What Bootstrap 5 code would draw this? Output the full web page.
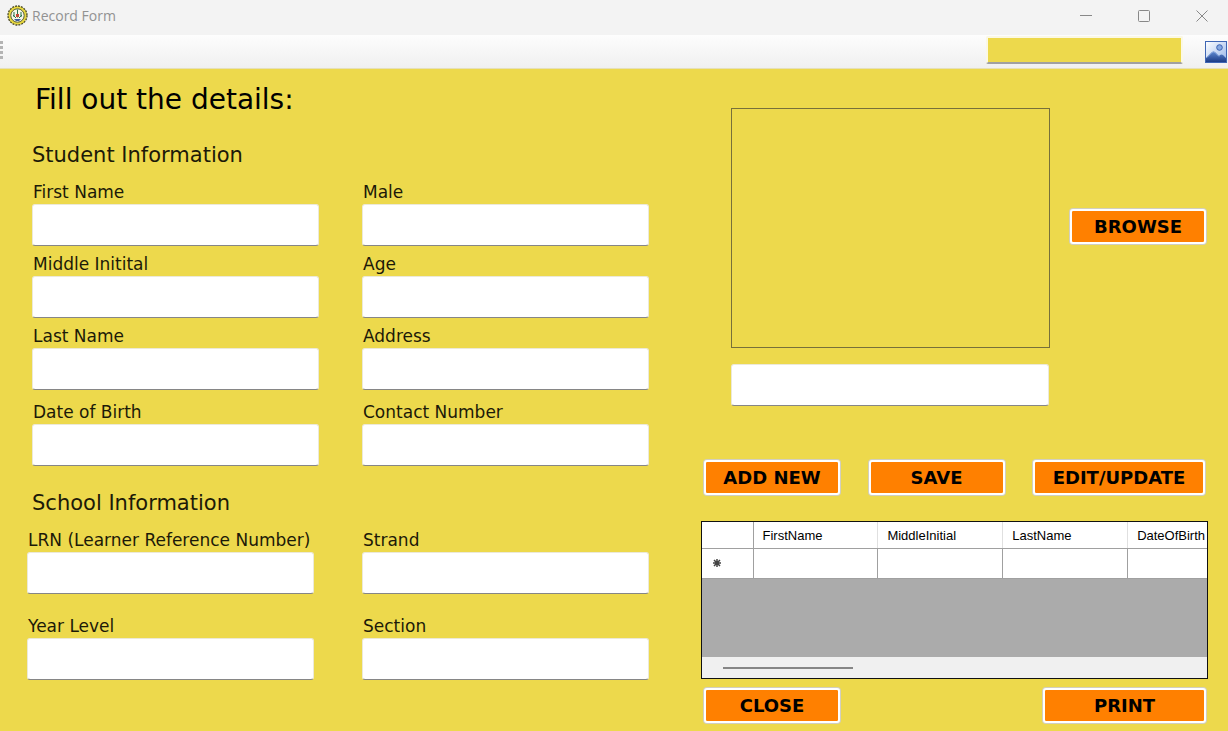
<!DOCTYPE html>
<html lang="en">
<head>
<meta charset="utf-8">
<meta name="viewport" content="width=device-width, initial-scale=1">
<title>Record Form</title>
<link href="https://cdn.jsdelivr.net/npm/bootstrap@5.3.0/dist/css/bootstrap.min.css" rel="stylesheet">
<style>
  body { background: #edd94c; color: #1c1a08; font-family: "DejaVu Sans", Verdana, sans-serif; min-height: 100vh; }
  .titlebar { height: 35px; background: #f3f3f3; color: #929292; font: 14px/20px "Open Sans", "Noto Sans", sans-serif; padding: 0 20px 4px 7px; }
  .titlebar button, .tool-btn { border: 0; background: none; padding: 0; display: flex; }
  .caption-btns { gap: 46px; }
  .toolstrip { height: 34px; background: linear-gradient(#fdfdfd, #f0f0f0); border-bottom: 1px solid #e6e0b8; padding-right: 1px; gap: 22px; }
  .tool-input { width: 197px; height: 28px; background: #edd94c; border: 2px solid #fbf8e4; border-bottom-color: #a0a0a0; border-radius: 2px; }
  .form-area { display: grid; grid-template-columns: minmax(0, 649fr) minmax(0, 507fr); column-gap: 52px; padding-right: 20px; }
  .form-title { font-size: 28px; line-height: 36px; margin: 0; padding: 13px 0 0 35px; color: #000; }
  .section-title { font-size: 21px; line-height: 28px; margin: 0; }
  .fields { display: grid; grid-template-columns: repeat(2, minmax(0, 1fr)); }
  .student { padding: 23px 0 0 32px; }
  .student .fields { gap: 6px 43px; padding-top: 11px; }
  .school { padding: 23px 0 0 27px; }
  .school .section-title { padding-left: 5px; }
  .school .fields { gap: 20px 48px; padding-top: 11px; }
  .fields label { display: block; font-size: 17px; line-height: 24px; padding-left: 1px; white-space: nowrap; }
  .text-field { height: 42px; background: #fff; border: 1px solid #ece9d8; border-bottom-color: #868686; border-radius: 3px; }
  .btn-form { --bs-btn-bg: #ff8000; --bs-btn-color: #000; --bs-btn-hover-bg: #ff9020; --bs-btn-hover-color: #000; --bs-btn-active-bg: #e67300;
    height: 35px; min-width: 136px; margin: 1px; padding: 0; border: 2px solid #fff !important; border-radius: 3px; box-shadow: 0 0 0 1px #d2cfc0;
    font-size: 18px; line-height: 30px; font-weight: 700; background-clip: padding-box; }
  .btn-wide { min-width: 172px; }
  .btn-print { min-width: 163px; }
  .photo-row { padding: 39px 1px 0 30px; gap: 19px; }
  .photo { height: 240px; border: 1px solid #77703a; }
  .photo-name { padding: 16px 159px 0 30px; }
  .actions { padding: 53px 2px 0; }
  .bottom-actions { padding: 8px 1px 0 2px; }
  .data-grid { height: 158px; margin-top: 25px; border: 1px solid #111; background: #ababab; color: #000; font: 13px/16px "Liberation Sans", Arial, sans-serif; }
  .data-grid table { width: 551px; table-layout: fixed; border-collapse: collapse; background: #fff; }
  .data-grid th { height: 26px; padding: 3px 9px 0; font-weight: 400; border-right: 1px solid #e0e0e0; border-bottom: 1px solid #a0a0a0; }
  .data-grid td { height: 30px; border-right: 1px solid #a0a0a0; border-bottom: 1px solid #a0a0a0; }
  .data-grid tr > :first-child { width: 51px; border-right-color: #a0a0a0; }
  .data-grid td:first-child { padding-left: 11px; }
  .scroll-track { height: 21px; background: #f0f0f0; padding-left: 21px; }
  .scroll-thumb { width: 130px; height: 2px; background: #868686; }
</style>
</head>
<body>
<header>
  <div class="titlebar d-flex align-items-center justify-content-between">
    <div class="d-flex align-items-center gap-1">
      <svg width="21" height="21" viewBox="0 0 21 21" aria-hidden="true">
        <circle cx="10.500" cy="10.500" r="9.500" fill="#e8d83e" stroke="#4b4a26" stroke-width="1.300" stroke-dasharray="2 1"/>
        <circle cx="10.500" cy="10.500" r="6.700" fill="#f6f6e8" stroke="#59603b"/>
        <path d="M10.500 4.500v8M7 7v5M14 7v5M6 10l3 3M15 10l-3 3" stroke="#26734a" fill="none"/>
        <path d="M9 9h3v3H9z" fill="#c3483a"/><path d="M7 14h7l-2 2H9z" fill="#3b5d9c"/>
      </svg>
      <span>Record Form</span>
    </div>
    <div class="caption-btns d-flex">
      <button type="button" aria-label="Minimize"><svg width="12" height="12"><path d="M0 5.500h12" stroke="#888"/></svg></button>
      <button type="button" aria-label="Maximize"><svg width="12" height="12"><rect x=".5" y=".5" width="11" height="11" rx="1" fill="none" stroke="#888"/></svg></button>
      <button type="button" aria-label="Close"><svg width="12" height="12"><path d="M.5 .5l11 11M11.500 .5l-11 11" stroke="#888"/></svg></button>
    </div>
  </div>
  <div class="toolstrip d-flex align-items-center">
    <svg class="mb-1" width="4" height="20" fill="#b4b4b4" aria-hidden="true"><path d="M0 1h3v3H0zM0 6h3v3H0zM0 11h3v3H0zM0 16h3v3H0z"/></svg>
    <input class="tool-input ms-auto mb-1" type="text" aria-label="Search">
    <button class="tool-btn" type="button" aria-label="Picture">
      <svg width="22" height="22" viewBox="0 0 22 22">
        <defs><linearGradient id="sky" x2="1" y2="1"><stop stop-color="#fff"/><stop offset="1" stop-color="#94b4e8"/></linearGradient>
        <linearGradient id="hill" x2="0" y2="1"><stop stop-color="#5f8ad0"/><stop offset="1" stop-color="#1c3c86"/></linearGradient></defs>
        <rect x=".5" y=".5" width="21" height="21" fill="url(#sky)" stroke="#3f66b4"/>
        <circle cx="14.500" cy="6.500" r="2.800" fill="#86a8e0" stroke="#3b62b2"/>
        <path d="M1 17l6-6q1.500-1 3 0l4 4 1-1q1.500-1 3 0l3 3v4H1z" fill="url(#hill)"/>
        <path d="M2 16.500l5-5q1.500-1 3 0l4 4" stroke="#86a5dc" fill="none"/>
      </svg>
    </button>
  </div>
</header>
<main class="form-area">
  <form>
    <h1 class="form-title">Fill out the details:</h1>
    <section class="student">
      <h2 class="section-title">Student Information</h2>
      <div class="fields">
        <div><label for="first">First Name</label><input class="form-control text-field" id="first" type="text"></div>
        <div><label for="male">Male</label><input class="form-control text-field" id="male" type="text"></div>
        <div><label for="middle">Middle Initital</label><input class="form-control text-field" id="middle" type="text"></div>
        <div><label for="age">Age</label><input class="form-control text-field" id="age" type="text"></div>
        <div><label for="last">Last Name</label><input class="form-control text-field" id="last" type="text"></div>
        <div><label for="address">Address</label><input class="form-control text-field" id="address" type="text"></div>
        <div class="mt-1"><label for="birth">Date of Birth</label><input class="form-control text-field" id="birth" type="text"></div>
        <div class="mt-1"><label for="contact">Contact Number</label><input class="form-control text-field" id="contact" type="text"></div>
      </div>
    </section>
    <section class="school">
      <h2 class="section-title">School Information</h2>
      <div class="fields">
        <div><label for="lrn">LRN (Learner Reference Number)</label><input class="form-control text-field" id="lrn" type="text"></div>
        <div><label for="strand">Strand</label><input class="form-control text-field" id="strand" type="text"></div>
        <div><label for="year">Year Level</label><input class="form-control text-field" id="year" type="text"></div>
        <div><label for="section">Section</label><input class="form-control text-field" id="section" type="text"></div>
      </div>
    </section>
  </form>
  <section>
    <div class="photo-row d-flex align-items-center">
      <div class="photo flex-grow-1"></div>
      <button class="btn btn-form mb-1" type="button">BROWSE</button>
    </div>
    <div class="photo-name"><input class="form-control text-field" type="text" aria-label="Picture file"></div>
    <div class="actions d-flex justify-content-between">
      <button class="btn btn-form" type="button">ADD NEW</button>
      <button class="btn btn-form" type="button">SAVE</button>
      <button class="btn btn-form btn-wide" type="button">EDIT/UPDATE</button>
    </div>
    <div class="data-grid d-flex flex-column overflow-hidden">
      <table>
        <thead><tr><th></th><th>FirstName</th><th>MiddleInitial</th><th>LastName</th><th>DateOfBirth</th></tr></thead>
        <tbody><tr><td><svg class="d-block" width="8" height="8" stroke="#444" stroke-width="1.500"><path d="M4 0v8M0 4h8M1 1l6 6M7 1L1 7"/></svg></td><td></td><td></td><td></td><td></td></tr></tbody>
      </table>
      <div class="scroll-track mt-auto d-flex align-items-center"><div class="scroll-thumb"></div></div>
    </div>
    <div class="bottom-actions d-flex justify-content-between">
      <button class="btn btn-form" type="button">CLOSE</button>
      <button class="btn btn-form btn-print" type="button">PRINT</button>
    </div>
  </section>
</main>
<script src="https://cdn.jsdelivr.net/npm/bootstrap@5.3.0/dist/js/bootstrap.bundle.min.js"></script>
</body>
</html>
